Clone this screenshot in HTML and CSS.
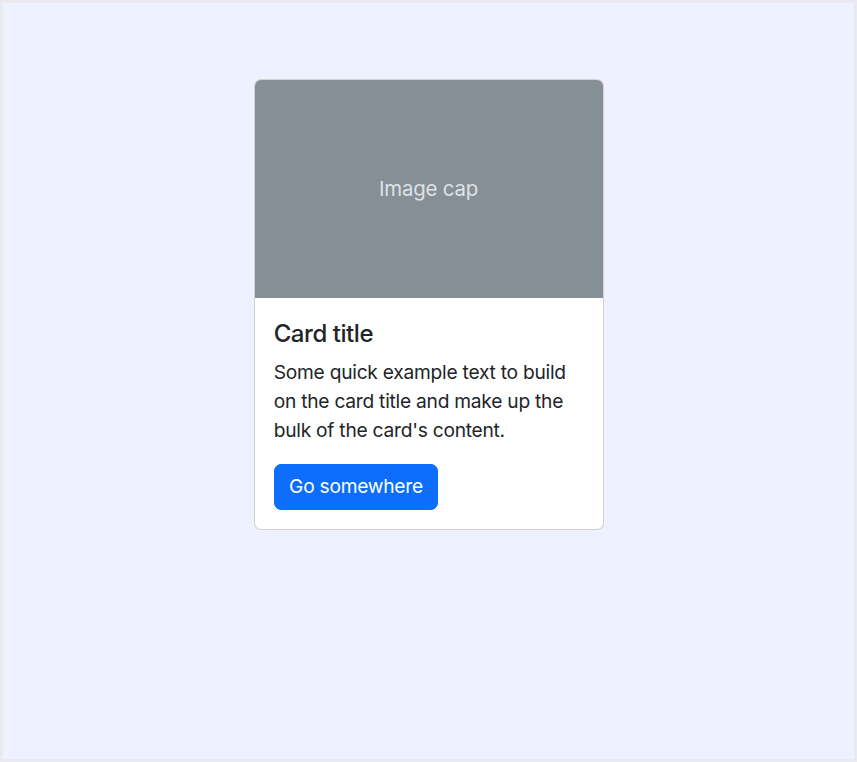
FILE: index.html
```html
<!DOCTYPE html>
<html lang="en">
<head>
<meta charset="utf-8">
<title>Card</title>
<link rel="stylesheet" href="styles.css">
</head>
<body>
<div class="frame">
  <div class="card">
    <div class="card-img">Image cap</div>
    <div class="card-body">
      <h5 class="card-title">Card title</h5>
      <p class="card-text">Some quick example text to build on the card title and make up the bulk of the card's content.</p>
      <a href="#" class="btn">Go somewhere</a>
    </div>
  </div>
</div>
</body>
</html>
```
FILE: styles.css
```css
* { box-sizing: border-box; }
html, body { margin: 0; padding: 0; }
body {
  width: 857px;
  height: 762px;
  font-family: "Inter", "Noto Sans", sans-serif;
  font-size: 19.2px;
  line-height: 1.5;
  letter-spacing: -0.25px;
  color: #212529;
}
.frame {
  width: 857px;
  height: 762px;
  border: 3px solid #e9e9ef;
  background: #eef1ff;
  display: flex;
  justify-content: center;
  align-items: flex-start;
  padding-top: 76px;
}
.card {
  width: 350px;
  background: #fff;
  border: 1px solid rgba(0,0,0,0.175);
  border-radius: 7px;
  overflow: hidden;
}
.card-img {
  height: 218px;
  background: #868e96;
  color: #dee2e6;
  font-size: 20.4px;
  letter-spacing: -0.2px;
  display: flex;
  align-items: center;
  justify-content: center;
}
.card-body {
  padding: 21.5px 19.2px 19.2px;
}
.card-title {
  margin: 0 0 10px;
  font-size: 24px;
  font-weight: 500;
  letter-spacing: -0.45px;
  line-height: 1.2;
}
.card-text {
  margin: 0 0 19px;
}
.btn {
  display: inline-block;
  padding: 7.6px 14.4px;
  background: #0d6efd;
  color: #fff;
  border: 1px solid #0d6efd;
  border-radius: 7px;
  text-decoration: none;
}
```
